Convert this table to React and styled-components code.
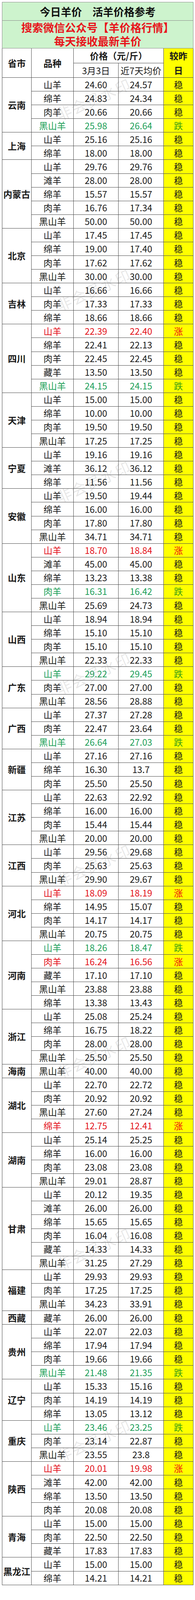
import React from 'react';
import styled, { createGlobalStyle } from 'styled-components';

const GlobalStyle = createGlobalStyle`
  html, body {
    margin: 0;
    padding: 0;
    background: #fff;
  }
  body {
    font-family: "Noto Sans CJK SC", "Noto Sans", sans-serif;
    color: #1a1a1a;
  }
`;

const Page = styled.div`
  position: relative;
  width: 500px;
  height: 4213px;
  padding: 5px;
  box-sizing: border-box;
  overflow: hidden;
`;

const Table = styled.table`
  width: 490px;
  border-collapse: collapse;
  table-layout: fixed;
`;

const Cell = styled.td`
  border: 1px solid #4a4a4a;
  padding: 0;
  text-align: center;
  vertical-align: middle;
  font-size: 23px;
  line-height: 1;
  white-space: nowrap;
  background: ${(p) => (p.$yellow ? '#ffff00' : 'transparent')};
  color: ${(p) => p.$color || '#1a1a1a'};
  font-weight: ${(p) => (p.$bold ? 700 : 400)};
`;

const TitleCell = styled.td`
  border: 1px solid #8a8a8a;
  background: #cdf3cd;
  text-align: center;
  font-size: 27px;
  line-height: 1;
  font-weight: 700;
  color: #111;
  padding: 0;
`;

const NoticeCell = styled(TitleCell)`
  color: #e8141c;
  font-size: 28px;
  line-height: 35px;
`;

const HeadCell = styled(Cell)`
  font-weight: ${(p) => (p.$light ? 400 : 700)};
  line-height: ${(p) => (p.$tall ? '37px' : 1)};
`;

const Row = styled.tr`
  height: ${(p) => p.$h}px;
`;

const Watermark = styled.span`
  position: absolute;
  left: 240px;
  transform: translate(-50%, -50%) rotate(-24deg);
  font-size: 38px;
  letter-spacing: 3px;
  color: rgba(110, 110, 110, 0.16);
  white-space: nowrap;
  pointer-events: none;
`;

const RED = '#e3131b';
const GREEN = '#1e9f5a';
const TREND = {
  w: { label: '稳', color: '#1a1a1a', text: '#1a1a1a' },
  z: { label: '涨', color: '#ee1111', text: RED },
  d: { label: '跌', color: '#3a9e14', text: GREEN },
};

const data = [
  ['云南', [['山羊', '24.60', '24.57'], ['绵羊', '24.83', '24.34'], ['肉羊', '20.66', '20.66'], ['黑山羊', '25.98', '26.64', 'd']]],
  ['上海', [['山羊', '25.16', '25.16'], ['绵羊', '18.00', '18.00']]],
  ['内蒙古', [['山羊', '29.76', '29.76'], ['滩羊', '28.00', '28.00'], ['绵羊', '15.57', '15.57'], ['肉羊', '16.76', '17.34'], ['黑山羊', '50.00', '50.00']]],
  ['北京', [['山羊', '17.45', '17.45'], ['绵羊', '19.00', '17.40'], ['肉羊', '17.62', '17.62'], ['黑山羊', '30.00', '30.00']]],
  ['吉林', [['山羊', '16.66', '16.66'], ['肉羊', '17.33', '17.33'], ['绵羊', '18.66', '18.66']]],
  ['四川', [['山羊', '22.39', '22.40', 'z'], ['绵羊', '22.41', '22.13'], ['肉羊', '22.45', '22.45'], ['藏羊', '13.50', '13.50'], ['黑山羊', '24.15', '24.15', 'd']]],
  ['天津', [['山羊', '15.00', '15.00'], ['绵羊', '10.00', '10.00'], ['肉羊', '19.50', '19.50'], ['黑山羊', '17.25', '17.25']]],
  ['宁夏', [['山羊', '19.16', '19.16'], ['滩羊', '36.12', '36.12'], ['绵羊', '11.56', '11.56']]],
  ['安徽', [['山羊', '19.50', '19.44'], ['绵羊', '16.00', '16.00'], ['肉羊', '17.80', '17.80'], ['黑山羊', '34.71', '34.71']]],
  ['山东', [['山羊', '18.70', '18.84', 'z'], ['滩羊', '45.00', '45.00'], ['绵羊', '13.23', '13.38'], ['肉羊', '16.31', '16.42', 'd'], ['黑山羊', '25.69', '24.73']]],
  ['山西', [['山羊', '18.94', '18.94'], ['绵羊', '15.10', '15.10'], ['肉羊', '15.10', '15.10'], ['黑山羊', '22.33', '22.33']]],
  ['广东', [['山羊', '29.22', '29.45', 'd'], ['肉羊', '27.00', '27.00'], ['黑山羊', '28.56', '28.88']]],
  ['广西', [['山羊', '27.37', '27.28'], ['肉羊', '22.47', '23.64'], ['黑山羊', '26.64', '27.03', 'd']]],
  ['新疆', [['山羊', '27.16', '27.16'], ['绵羊', '16.30', '13.7'], ['肉羊', '25.50', '25.50']]],
  ['江苏', [['山羊', '22.63', '22.92'], ['绵羊', '16.00', '16.00'], ['肉羊', '15.44', '15.44'], ['黑山羊', '20.00', '20.00']]],
  ['江西', [['山羊', '29.56', '29.68'], ['肉羊', '25.63', '25.63'], ['黑山羊', '29.90', '29.67']]],
  ['河北', [['山羊', '18.09', '18.19', 'z'], ['绵羊', '14.95', '15.07'], ['肉羊', '14.17', '14.17'], ['黑山羊', '20.75', '20.75']]],
  ['河南', [['山羊', '18.26', '18.47', 'd'], ['肉羊', '16.24', '16.56', 'z'], ['藏羊', '17.10', '17.10'], ['黑山羊', '23.88', '23.88'], ['绵羊', '13.38', '13.43']]],
  ['浙江', [['山羊', '25.08', '25.24'], ['绵羊', '16.75', '18.22'], ['肉羊', '28.00', '28.00'], ['黑山羊', '25.50', '25.50']]],
  ['海南', [['黑山羊', '40.00', '40.00']]],
  ['湖北', [['山羊', '22.70', '22.72'], ['肉羊', '20.92', '20.92'], ['黑山羊', '27.60', '27.24'], ['绵羊', '12.75', '12.41', 'z']]],
  ['湖南', [['山羊', '25.14', '25.25'], ['绵羊', '16.00', '16.00'], ['肉羊', '23.08', '23.08'], ['黑山羊', '29.01', '28.87']]],
  ['甘肃', [['山羊', '20.12', '19.35'], ['滩羊', '26.00', '26.00'], ['绵羊', '15.65', '15.65'], ['肉羊', '16.04', '16.08'], ['藏羊', '14.33', '14.33'], ['黑山羊', '31.25', '27.29']]],
  ['福建', [['山羊', '29.93', '29.93'], ['肉羊', '17.25', '17.25'], ['黑山羊', '34.23', '33.91']]],
  ['西藏', [['藏羊', '26.00', '26.00']]],
  ['贵州', [['山羊', '22.07', '22.03'], ['绵羊', '17.94', '17.94'], ['肉羊', '19.66', '19.66'], ['黑山羊', '21.48', '21.35', 'd']]],
  ['辽宁', [['山羊', '15.33', '15.16'], ['肉羊', '14.19', '14.19'], ['绵羊', '13.05', '13.12']]],
  ['重庆', [['山羊', '23.46', '23.25', 'd'], ['肉羊', '23.14', '22.87'], ['黑山羊', '23.55', '23.8']]],
  ['陕西', [['山羊', '20.01', '19.98', 'z'], ['滩羊', '42.00', '42.00'], ['绵羊', '13.50', '13.50'], ['肉羊', '20.08', '20.08']]],
  ['青海', [['山羊', '15.00', '15.00'], ['肉羊', '22.50', '22.50'], ['藏羊', '17.83', '17.83']]],
  ['黑龙江', [['山羊', '15.00', '15.00'], ['绵羊', '14.21', '14.21']]],
];

const marks = [253, 741, 1232, 1723, 2214, 2705, 3196, 3687];

const App = () => (
  <Page>
    <GlobalStyle />
    <Table>
      <colgroup>
        <col style={{ width: 75 }} />
        <col style={{ width: 108 }} />
        <col style={{ width: 115 }} />
        <col style={{ width: 116 }} />
        <col style={{ width: 76 }} />
      </colgroup>
      <tbody>
        <Row $h={47}>
          <TitleCell colSpan={5}>今日羊价　活羊价格参考</TitleCell>
        </Row>
        <Row $h={71}>
          <NoticeCell colSpan={5}>
            搜索微信公众号【羊价格行情】
            <br />
            每天接收最新羊价
          </NoticeCell>
        </Row>
        <Row $h={36}>
          <HeadCell rowSpan={2}>省市</HeadCell>
          <HeadCell rowSpan={2}>品种</HeadCell>
          <HeadCell colSpan={2}>价格（元/斤）</HeadCell>
          <HeadCell rowSpan={2} $yellow $tall>
            较昨
            <br />
            日
          </HeadCell>
        </Row>
        <Row $h={35}>
          <HeadCell $light>3月3日</HeadCell>
          <HeadCell $light>近7天均价</HeadCell>
        </Row>
        {data.map(([province, items]) =>
          items.map(([name, today, week, t = 'w'], i) => {
            const trend = TREND[t];
            return (
              <Row $h={35.09} key={province + name}>
                {i === 0 && (
                  <Cell rowSpan={items.length} $bold>
                    {province}
                  </Cell>
                )}
                <Cell $color={trend.text}>{name}</Cell>
                <Cell $color={trend.text}>{today}</Cell>
                <Cell $color={trend.text}>{week}</Cell>
                <Cell $yellow $color={trend.color}>
                  {trend.label}
                </Cell>
              </Row>
            );
          })
        )}
      </tbody>
    </Table>
    {marks.map((y) => (
      <Watermark key={y} style={{ top: y }}>
        非会员水印
      </Watermark>
    ))}
  </Page>
);

export default App;
